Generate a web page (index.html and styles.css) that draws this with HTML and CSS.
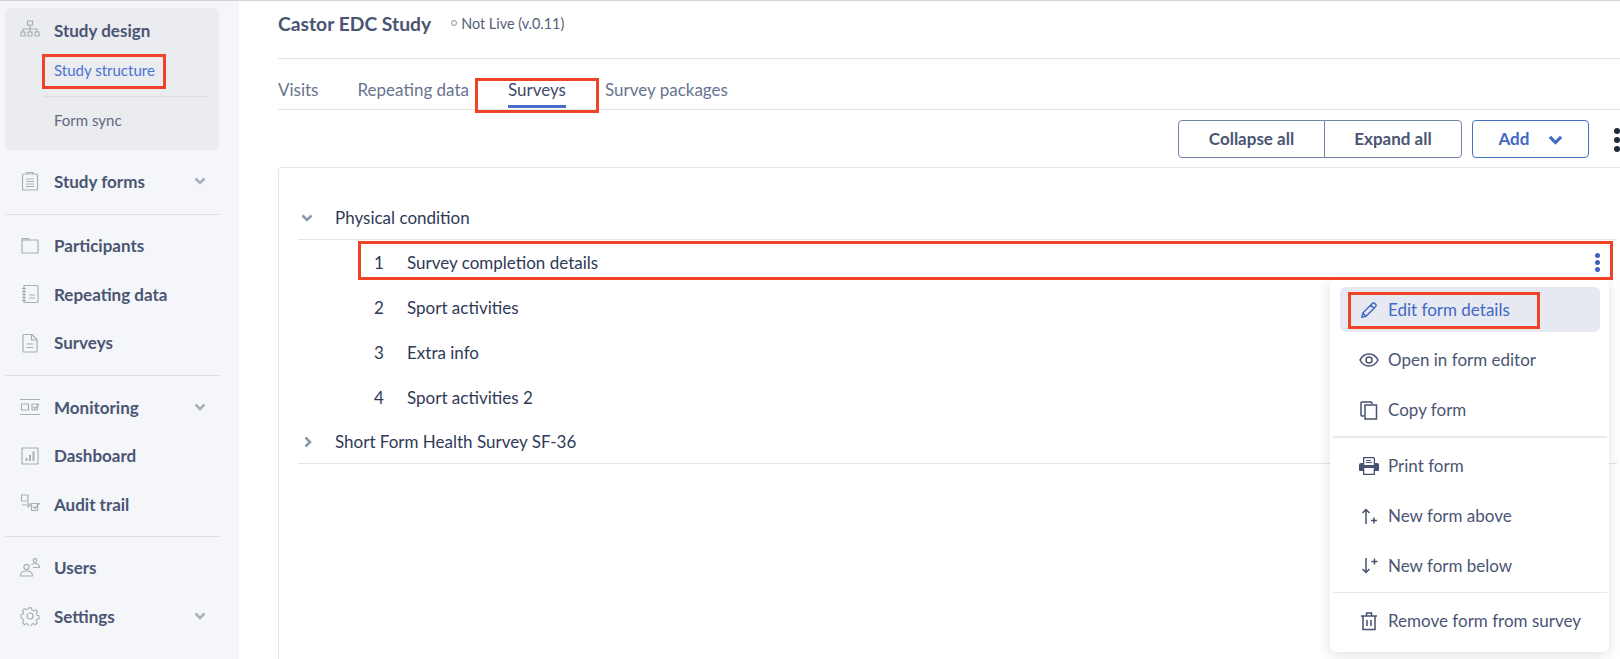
FILE: index.html
```html
<!DOCTYPE html>
<html lang="en">
<head>
<meta charset="utf-8">
<title>Castor EDC Study</title>
<link rel="stylesheet" href="styles.css">
</head>
<body>
<div class="app">
  <aside class="sidebar">
    <section class="panel">
      <div class="nav-item panel-head">
        <svg class="nav-icon" viewBox="0 0 20 20"><path d="M7.5 1h5v4h-5zM10 5v4M3 9h14M3 9v3M10 9v3M17 9v3M1 12h4v4H1zM8 12h4v4H8zM15 12h4v4h-4z"/></svg>
        <span>Study design</span>
      </div>
      <a class="sub-item active">Study structure</a>
      <a class="sub-item second">Form sync</a>
    </section>
    <div class="nav-group first">
      <div class="nav-item">
        <svg class="nav-icon" viewBox="0 0 20 20"><path d="M3.5 3h13a1 1 0 0 1 1 1v14a1 1 0 0 1-1 1h-13a1 1 0 0 1-1-1V4a1 1 0 0 1 1-1zM7 3V1.500h6V3M6 8h8M6 10.500h8M6 13h8M6 15.500h8"/></svg>
        <span>Study forms</span>
        <svg class="nav-chev" viewBox="0 0 12 8"><path d="M1.500 1.500 6 6l4.500-4.500"/></svg>
      </div>
    </div>
    <div class="nav-group">
      <div class="nav-item">
        <svg class="nav-icon" viewBox="0 0 20 20"><path d="M2 4V2.500h6L9.500 4H18v13H2z"/><path d="M2 4h7.500"/></svg>
        <span>Participants</span>
      </div>
      <div class="nav-item">
        <svg class="nav-icon" viewBox="0 0 20 20"><path d="M4 1.500h13a1 1 0 0 1 1 1v15a1 1 0 0 1-1 1H4zM2 4.500h4M2 7.500h4M2 10.500h4M2 13.500h4M2 16.500h4M9 11h6M9 14h6"/></svg>
        <span>Repeating data</span>
      </div>
      <div class="nav-item">
        <svg class="nav-icon" viewBox="0 0 20 20"><path d="M4 1.500h8l5 5V18a1 1 0 0 1-1 1H4a1 1 0 0 1-1-1V2.500a1 1 0 0 1 1-1zM11.500 1.500V7H17M6.500 11h7M6.500 14.500h7"/></svg>
        <span>Surveys</span>
      </div>
    </div>
    <div class="nav-group tight">
      <div class="nav-item">
        <svg class="nav-icon" viewBox="0 0 20 20"><path d="M0 2.500h20M0 17.500h20M1.500 7h7v6h-7zM12 7h5.500v6H12zM13.500 10l1.500 1.500 4-4.500"/></svg>
        <span>Monitoring</span>
        <svg class="nav-chev" viewBox="0 0 12 8"><path d="M1.500 1.500 6 6l4.500-4.500"/></svg>
      </div>
      <div class="nav-item">
        <svg class="nav-icon" viewBox="0 0 20 20"><path d="M2 2h16v16H2z"/><path class="thick" d="M6.500 15v-3M10 15V9M13.500 15V5.500"/></svg>
        <span>Dashboard</span>
      </div>
      <div class="nav-item">
        <svg class="nav-icon" viewBox="0 0 20 20"><path d="M1.500 1h6.500v6H1.500zM2 11h8M7.500 8.500 10 11l-2.500 2.500M11.500 9.500h6v7h-6zM13 12.500l2 2 4.500-5.500"/></svg>
        <span>Audit trail</span>
      </div>
    </div>
    <div class="nav-group">
      <div class="nav-item">
        <svg class="nav-icon" viewBox="0 0 20 20"><circle cx="6.500" cy="9" r="2.600"/><path d="M.5 18c0-3.500 2.500-5 6-5s6 1.500 6 5zM13 9.500h6.500c0-3-2-4-4.500-4-1.500 0-3 .5-3.500 1.500"/><circle cx="15" cy="2.500" r="1.800"/></svg>
        <span>Users</span>
      </div>
      <div class="nav-item">
        <svg class="nav-icon" viewBox="0 0 20 20"><circle cx="10" cy="10" r="3"/><path d="M8.300 1h3.400l.5 2.500 1.800.8 2.200-1.400 2.200 2.400-1.400 2.100.7 1.800 2.300.5v3.400l-2.400.5-.7 1.800 1.400 2.100-2.300 2.300-2.100-1.400-1.800.7-.5 2.400H8.300l-.5-2.400-1.800-.7-2.100 1.400-2.300-2.300 1.400-2.100-.7-1.800L0 11.700V8.300l2.300-.5.7-1.800-1.400-2.100 2.300-2.400 2.200 1.400 1.800-.8z" transform="translate(1 1) scale(.9)"/></svg>
        <span>Settings</span>
        <svg class="nav-chev" viewBox="0 0 12 8"><path d="M1.500 1.500 6 6l4.500-4.500"/></svg>
      </div>
    </div>
  </aside>

  <main class="main">
    <header class="study-head">
      <h1 class="study-title">Castor EDC Study</h1>
      <span class="study-status"><i class="status-dot"></i>Not Live (v.0.11)</span>
    </header>
    <nav class="tabs">
      <a class="tab">Visits</a>
      <a class="tab">Repeating data</a>
      <a class="tab current">Surveys</a>
      <a class="tab">Survey packages</a>
    </nav>
    <div class="toolbar">
      <div class="btn-group">
        <button class="btn collapse">Collapse all</button>
        <button class="btn expand">Expand all</button>
      </div>
      <button class="btn add">Add
        <svg class="add-chev" viewBox="0 0 12 8"><path d="M1.500 1.500 6 6l4.500-4.500"/></svg>
      </button>
      <span class="page-kebab"><i></i><i></i><i></i></span>
    </div>
    <section class="card">
      <div class="group-row">
        <svg class="group-chev" viewBox="0 0 12 8"><path d="M1.500 1.500 6 6l4.500-4.500"/></svg>
        <span>Physical condition</span>
      </div>
      <ul class="forms">
        <li class="form-row"><span class="num">1</span><span>Survey completion details</span><span class="row-kebab"><i></i><i></i><i></i></span></li>
        <li class="form-row"><span class="num">2</span><span>Sport activities</span></li>
        <li class="form-row"><span class="num">3</span><span>Extra info</span></li>
        <li class="form-row"><span class="num">4</span><span>Sport activities 2</span></li>
      </ul>
      <div class="group-row closed">
        <svg class="group-chev right" viewBox="0 0 8 12"><path d="M1.500 1.500 6 6l-4.500 4.500"/></svg>
        <span>Short Form Health Survey SF-36</span>
      </div>
    </section>
  </main>
</div>

<div class="menu">
  <a class="menu-item hover">
    <svg class="menu-icon" viewBox="0 0 20 20"><path d="M3 17l.8-4L13.500 3.300a1.500 1.500 0 0 1 2.100 0l1.100 1.100a1.500 1.500 0 0 1 0 2.100L7 16.200zM11.800 5l3.200 3.200M3.800 13 7 16.200"/></svg>
    Edit form details</a>
  <a class="menu-item">
    <svg class="menu-icon" viewBox="0 0 20 20"><path d="M1 10c2-4 5-6 9-6s7 2 9 6c-2 4-5 6-9 6s-7-2-9-6z"/><circle cx="10" cy="10" r="3"/></svg>
    Open in form editor</a>
  <a class="menu-item before-line">
    <svg class="menu-icon" viewBox="0 0 20 20"><path d="M5 16H3a1 1 0 0 1-1-1V3a1 1 0 0 1 1-1h9a1 1 0 0 1 1 1v1"/><path d="M6 5h11.500v14H6z"/></svg>
    Copy form</a>
  <div class="menu-line thick"></div>
  <a class="menu-item">
    <svg class="menu-icon" viewBox="0 0 20 20"><path class="solid" fill-rule="evenodd" d="M4 1h11l1 1v5h1.500A2 2 0 0 1 20 9v5a1 1 0 0 1-1 1h-3v4H4v-4H1a1 1 0 0 1-1-1V9a2 2 0 0 1 2-2h2zm1.300 1.300V9h9.400V2.300zM5.300 12v5.700h9.400V12zM7 4h5v1H7zm0 2h6v1H7z"/></svg>
    Print form</a>
  <a class="menu-item">
    <svg class="menu-icon" viewBox="0 0 20 20"><path d="M7 18V4M3.500 7 7 3.500 10.500 7M12 14.500h6M15 11.500v6"/></svg>
    New form above</a>
  <a class="menu-item before-line">
    <svg class="menu-icon" viewBox="0 0 20 20"><path d="M7 2v14M3.500 13 7 16.500l3.500-3.500M12.500 5.500h6M15.500 2.500v6"/></svg>
    New form below</a>
  <div class="menu-line"></div>
  <a class="menu-item">
    <svg class="menu-icon" viewBox="0 0 20 20"><path d="M2 5h16M4 5v13.500h12V5M7.500 5V2h5v3M8 9v6M12 9v6"/></svg>
    Remove form from survey</a>
</div>

<span class="mark mark-structure"></span>
<span class="mark mark-tab"></span>
<span class="mark mark-row"></span>
<span class="mark mark-edit"></span>
</body>
</html>
```
FILE: styles.css
```css
* { box-sizing: border-box; }
html, body { margin: 0; height: 659px; overflow: hidden; background: #fff; }
body { font-family: Lato, "Open Sans", sans-serif; color: #2f3a57; position: relative; border-top: 1px solid #d2d3d5; }
ul { list-style: none; margin: 0; padding: 0; }
button { font: inherit; }

.app { display: flex; height: 658px; }

.sidebar { width: 239px; flex: none; background: #f5f6f9; padding: 7px 19px 0 5px; }
.panel { width: 214px; height: 142px; background: #ebecef; border-radius: 5px; }
.nav-item { display: flex; align-items: center; height: 48.5px; padding-left: 15px; font-size: 17px; font-weight: 700; color: #4a5573; }
.panel-head { height: 44px; }
.nav-icon { width: 20px; height: 20px; margin-right: 14px; flex: none; fill: none; stroke: #a7aebb; stroke-width: 1.2; }
.nav-icon .thick { stroke-width: 2; }
.nav-chev { width: 12px; height: 8px; margin-left: auto; margin-right: 14px; fill: none; stroke: #a7aebb; stroke-width: 2.500; }
.sub-item { display: block; margin-left: 49px; font-size: 15px; line-height: 18px; color: #5e6980; }
.sub-item.active { color: #4a72d6; margin-top: 9px; }
.sub-item.second { margin: 17px 10px 0 39px; padding: 14px 0 0 10px; border-top: 1px solid #dcdde1; }
.nav-group { border-top: 1px solid #dfe0e4; padding: 7px 0 8px; }
.nav-group.first { border-top: 0; }
.nav-group.tight { padding-bottom: 7px; }

.main { flex: 1; min-width: 0; padding-left: 39px; }
.study-head { display: flex; align-items: center; height: 58px; padding-bottom: 13px; border-bottom: 1px solid #e3e4e7; }
.study-title { margin: 0 20px 0 0; font-size: 19.3px; font-weight: 700; color: #4a5573; }
.study-status { display: flex; align-items: center; font-size: 14.4px; color: #55607a; }
.status-dot { width: 6px; height: 6px; border: 1px solid #8b93a5; border-radius: 50%; margin-right: 4px; }

.tabs { display: flex; height: 51px; padding-top: 15px; border-bottom: 1px solid #e3e4e7; }
.tab { height: 35px; line-height: 32px; font-size: 17px; color: #68738f; margin-right: 39px; }
.tab.current { color: #3e4a6b; border-bottom: 3px solid #4a6cc4; height: 34px; }

.toolbar { display: flex; align-items: center; height: 57px; justify-content: flex-end; position: relative; }
.btn-group { display: flex; margin-right: 10px; }
.btn { height: 38px; background: #fff; font-size: 17px; font-weight: 700; color: #4a5573; border: 1px solid #7283a5; cursor: pointer; }
.collapse { width: 147px; border-radius: 4px 0 0 4px; }
.expand { width: 138px; margin-left: -1px; border-radius: 0 4px 4px 0; }
.add { width: 117px; margin-right: 31px; border-color: #4a72c4; color: #4168c4; border-radius: 4px; }
.add-chev { width: 15px; height: 10px; margin-left: 14px; fill: none; stroke: #4168c4; stroke-width: 2.500; }
.page-kebab { position: absolute; right: 0; top: 18px; width: 6px; display: flex; flex-direction: column; gap: 3px; }
.page-kebab i { width: 6px; height: 6px; border-radius: 50%; background: #1e2a3e; }

.card { height: 500px; border: 1px solid #e6e7ec; border-right: 0; border-bottom: 0; border-radius: 4px 0 0 0; padding: 28px 3px 0 19px; }
.group-row { display: flex; align-items: center; height: 44px; border-bottom: 1px solid #e3e4e7; font-size: 17px; color: #2f3a57; }
.group-chev { width: 12px; height: 8px; margin: 0 22px 0 3px; flex: none; fill: none; stroke: #8c96ac; stroke-width: 2.500; }
.group-chev.right { width: 8px; height: 12px; margin: 0 23px 0 6px; }
.forms { padding-left: 76px; }
.form-row { display: flex; align-items: center; height: 45px; font-size: 17px; color: #2f3a57; position: relative; }
.num { width: 33px; }
.row-kebab { position: absolute; right: 17px; top: 13px; display: flex; flex-direction: column; gap: 2px; }
.row-kebab i { width: 5px; height: 5px; border-radius: 50%; background: #3e63bd; }

.menu { position: absolute; left: 1330px; top: 279px; width: 279px; height: 372px; background: #fff; border-radius: 6px; box-shadow: 0 3px 14px rgba(60, 70, 100, .16); padding: 7px 9px 9px 10px; }
.menu-item { display: flex; align-items: center; height: 45px; margin-bottom: 5px; padding-left: 20px; border-radius: 6px; font-size: 17px; color: #4a5573; }
.menu-item.before-line { margin-bottom: 4px; }
.menu-item.hover { background: #e7e9f2; color: #4168c4; }
.menu-icon { width: 20px; height: 20px; margin-right: 9px; margin-left: -1px; flex: none; fill: none; stroke: #46526f; stroke-width: 1.500; }
.hover .menu-icon { stroke: #4168c4; }
.menu-icon .solid { fill: #46526f; stroke: none; }
.menu-line { height: 1px; margin: 0 -7px 5px -7px; background: #e8e9f0; }
.menu-line.thick { height: 2px; }

.mark { position: absolute; border: 3px solid #ee4326; pointer-events: none; }
.mark-structure { left: 42px; top: 53px; width: 124px; height: 35px; }
.mark-tab { left: 475px; top: 77px; width: 124px; height: 35px; }
.mark-row { left: 358px; top: 240px; width: 1255px; height: 39px; }
.mark-edit { left: 1348px; top: 291px; width: 192px; height: 37px; }
```
